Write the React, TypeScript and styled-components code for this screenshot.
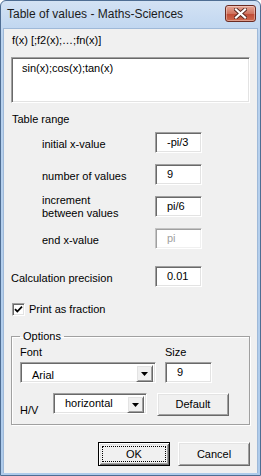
import * as React from 'react'
import styled, { createGlobalStyle, css } from 'styled-components'

const GlobalStyle = createGlobalStyle`
  html, body {
    margin: 0;
    padding: 0;
    background: #ffffff;
  }
  body {
    font-family: 'Liberation Sans', Arial, sans-serif;
    font-size: 11px;
    color: #000000;
  }
`

const sunken = css`
  box-sizing: border-box;
  border: 1px solid;
  border-color: #a0a0a0 #ffffff #ffffff #a0a0a0;
  box-shadow: inset 1px 1px 0 #696969, inset -1px -1px 0 #e3e3e3;
  background: #ffffff;
`

const raised = css`
  box-sizing: border-box;
  border: 1px solid;
  border-color: #ffffff #696969 #696969 #ffffff;
  box-shadow: inset 1px 1px 0 #e3e3e3, inset -1px -1px 0 #a0a0a0;
  background: #f0f0f0;
`

const Window = styled.div`
  box-sizing: border-box;
  width: 261px;
  height: 476px;
  display: flex;
  flex-direction: column;
  border: 1px solid #4e6d93;
  border-radius: 6px 6px 0 0;
  background: linear-gradient(#d3e2f4, #b9d2ee 40px, #aecbeb);
  overflow: hidden;
`

const TitleBar = styled.div`
  height: 27px;
  flex: none;
  display: flex;
  align-items: flex-start;
  padding: 0 4px 0 6px;
`

const Title = styled.div`
  flex: 1;
  font-family: 'Liberation Sans', Arial, sans-serif;
  font-size: 12px;
  line-height: 15px;
  padding-top: 6px;
  color: #1b1b1b;
`

const CloseButton = styled.div`
  box-sizing: border-box;
  width: 31px;
  height: 17px;
  margin-top: 4px;
  border: 1px solid #6b2b22;
  border-radius: 3px;
  background: linear-gradient(#e6a595, #d07560 50%, #bf4a34 51%, #cf6a4e);
  box-shadow: inset 0 0 0 1px rgba(255, 255, 255, 0.35);
  display: flex;
  align-items: center;
  justify-content: center;
`

const Client = styled.div`
  flex: 1;
  margin: 0 2px 2px 2px;
  background: #f0f0f0;
  border: 1px solid #9fb9d8;
  border-bottom: none;
  padding: 5px 7px 0 7px;
  display: flex;
  flex-direction: column;
`

const Text = styled.div<{ $indent?: number; $top?: number }>`
  line-height: 13px;
  padding-left: ${(p) => p.$indent ?? 0}px;
  margin-top: ${(p) => p.$top ?? 0}px;
  white-space: nowrap;
`

const ExprBox = styled.div`
  ${sunken};
  height: 46px;
  margin-top: 10px;
  padding: 4px 10px;
  line-height: 13px;
`

const RangeGrid = styled.div`
  display: grid;
  grid-template-columns: 113px 47px;
  grid-auto-rows: 21px;
  row-gap: 11px;
  padding-left: 31px;
  margin-top: 6px;
`

const RowLabel = styled.div<{ $lines?: number }>`
  align-self: center;
  line-height: 13px;
  margin-top: ${(p) => (p.$lines === 2 ? 0 : 3)}px;
  white-space: nowrap;
`

const Edit = styled.div<{ $disabled?: boolean; $width?: number }>`
  ${sunken};
  width: ${(p) => p.$width ?? 47}px;
  height: 21px;
  padding: 3px 0 0 11px;
  line-height: 13px;
  color: ${(p) => (p.$disabled ? '#a0a0a0' : '#000000')};
  ${(p) =>
    p.$disabled &&
    css`
      border-color: #c4c4c4 #ffffff #ffffff #c4c4c4;
      box-shadow: inset 1px 1px 0 #a0a0a0, inset -1px -1px 0 #f0f0f0;
    `}
`

const PrecisionRow = styled.div`
  display: grid;
  grid-template-columns: 144px 47px;
  margin-top: 17px;
`

const CheckRow = styled.div`
  display: flex;
  align-items: center;
  gap: 4px;
  margin-top: 16px;
  padding-left: 1px;
  line-height: 13px;
`

const CheckBox = styled.div`
  ${sunken};
  width: 13px;
  height: 13px;
  display: flex;
  align-items: center;
  justify-content: center;
`

const GroupBox = styled.fieldset`
  margin: 14px 0 0 0;
  padding: 0 8px 7px 8px;
  border: 1px solid #a0a0a0;
  box-shadow: 1px 1px 0 #ffffff, inset 1px 1px 0 #ffffff;
  min-width: 0;
`

const Legend = styled.legend`
  padding: 0 3px;
  margin-left: 0;
  line-height: 13px;
`

const OptionsGrid = styled.div`
  display: grid;
  grid-template-columns: 32px 95px 47px;
  column-gap: 9px;
  margin-top: 3px;
`

const HeadLabel = styled.div<{ $span?: number }>`
  grid-column: span ${(p) => p.$span ?? 1};
  line-height: 13px;
  padding-bottom: 3px;
`

const Combo = styled.div<{ $span?: number }>`
  ${sunken};
  grid-column: span ${(p) => p.$span ?? 1};
  height: 21px;
  display: flex;
  padding: 2px;
`

const ComboText = styled.div<{ $top?: number }>`
  flex: 1;
  padding: ${(p) => p.$top ?? 4}px 0 0 9px;
  line-height: 13px;
`

const ArrowButton = styled.div`
  ${raised};
  width: 17px;
  height: 17px;
  display: flex;
  align-items: center;
  justify-content: center;
`

const HVRow = styled.div`
  display: grid;
  grid-template-columns: 23px 94px 72px;
  column-gap: 10px;
  margin-top: 10px;
`

const HVLabel = styled.div`
  align-self: start;
  line-height: 13px;
  padding-top: 11px;
`

const PushButton = styled.div<{ $default?: boolean; $height?: number }>`
  ${raised};
  width: 72px;
  height: ${(p) => p.$height ?? 24}px;
  display: flex;
  align-items: center;
  justify-content: center;
  line-height: 13px;
  ${(p) =>
    p.$default &&
    css`
      border: 1px solid #000000;
      box-shadow: inset 1px 1px 0 #ffffff, inset -1px -1px 0 #696969, inset 2px 2px 0 #e3e3e3,
        inset -2px -2px 0 #a0a0a0;
      padding: 3px;
    `}
`

const FocusRect = styled.div`
  flex: 1;
  align-self: stretch;
  border: 1px dotted #000000;
  display: flex;
  align-items: center;
  justify-content: center;
`

const ButtonBar = styled.div`
  display: flex;
  justify-content: flex-end;
  gap: 8px;
  margin-top: 17px;
`

const DropArrow = () => (
  <svg width="7" height="4" viewBox="0 0 7 4">
    <path d="M0 0h7L3.5 4z" fill="#000" />
  </svg>
)

const rows = [
  { label: 'initial x-value', value: '-pi/3' },
  { label: 'number of values', value: '9' },
  { label: 'increment\nbetween values', value: 'pi/6' },
  { label: 'end x-value', value: 'pi', disabled: true },
]

export default function App() {
  return (
    <>
      <GlobalStyle />
      <Window>
        <TitleBar>
          <Title>Table of values - Maths-Sciences</Title>
          <CloseButton>
            <svg width="13" height="11" viewBox="0 0 13 11">
              <path d="M2 1.5L11 9.5M11 1.5L2 9.5" stroke="#5a2a22" strokeWidth="4" strokeLinecap="square" />
              <path d="M2 1.5L11 9.5M11 1.5L2 9.5" stroke="#ffffff" strokeWidth="2.2" strokeLinecap="square" />
            </svg>
          </CloseButton>
        </TitleBar>
        <Client>
          <Text $indent={1}>f(x) [;f2(x);…;fn(x)]</Text>
          <ExprBox>sin(x);cos(x);tan(x)</ExprBox>
          <Text $top={10} $indent={1}>Table range</Text>
          <RangeGrid>
            {rows.map((r) => (
              <React.Fragment key={r.label}>
                <RowLabel $lines={r.label.includes('\n') ? 2 : 1}>
                  {r.label.split('\n').map((l) => (
                    <div key={l}>{l}</div>
                  ))}
                </RowLabel>
                <Edit $disabled={r.disabled}>{r.value}</Edit>
              </React.Fragment>
            ))}
          </RangeGrid>
          <PrecisionRow>
            <RowLabel>Calculation precision</RowLabel>
            <Edit>0.01</Edit>
          </PrecisionRow>
          <CheckRow>
            <CheckBox>
              <svg width="9" height="9" viewBox="0 0 9 9">
                <path d="M1 4.2L3.3 6.5L8 1.6" stroke="#000" strokeWidth="1.8" fill="none" />
              </svg>
            </CheckBox>
            <span>Print as fraction</span>
          </CheckRow>
          <GroupBox>
            <Legend>Options</Legend>
            <OptionsGrid>
              <HeadLabel $span={2}>Font</HeadLabel>
              <HeadLabel>Size</HeadLabel>
              <Combo $span={2}>
                <ComboText>Arial</ComboText>
                <ArrowButton>
                  <DropArrow />
                </ArrowButton>
              </Combo>
              <Edit>9</Edit>
            </OptionsGrid>
            <HVRow>
              <HVLabel>H/V</HVLabel>
              <Combo>
                <ComboText $top={1}>horizontal</ComboText>
                <ArrowButton>
                  <DropArrow />
                </ArrowButton>
              </Combo>
              <PushButton $height={23}>Default</PushButton>
            </HVRow>
          </GroupBox>
          <ButtonBar>
            <PushButton $default>
              <FocusRect>OK</FocusRect>
            </PushButton>
            <PushButton>Cancel</PushButton>
          </ButtonBar>
        </Client>
      </Window>
    </>
  )
}
